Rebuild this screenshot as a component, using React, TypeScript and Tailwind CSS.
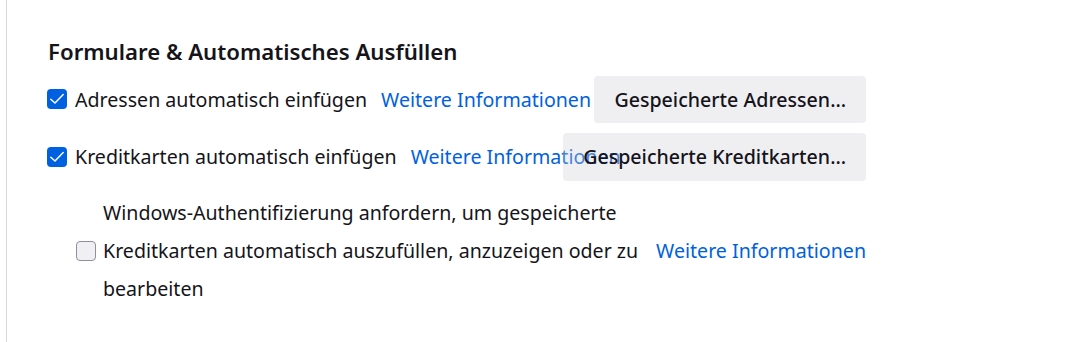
import React from "react"

const font = { fontFamily: '"Noto Sans", "Open Sans", sans-serif' }

function Check({ checked }: { checked: boolean }) {
  if (checked) {
    return (
      <span className="flex h-[20px] w-[20px] flex-none items-center justify-center rounded-[4px] bg-[#0061e0]">
        <svg width="18" height="18" viewBox="0 0 18 18" fill="none">
          <path d="M2.8 9.2 L7 13 L15.2 4.6" stroke="white" strokeWidth="1.5" strokeLinecap="round" strokeLinejoin="round" />
        </svg>
      </span>
    )
  }
  return <span className="block h-[20px] w-[20px] flex-none rounded-[4px] border border-[#8f8f9d] bg-[#f0f0f4]" />
}

function Link() {
  return <a className="whitespace-nowrap text-[#0061e0]">Weitere Informationen</a>
}

export default function App() {
  return (
    <div className="h-[342px] bg-white pl-[6px] text-[#15141a]" style={font}>
      <div className="h-full border-l border-[#d7d7db] pl-[40px] pt-[36px]">
        <h2 className="pl-[1px] text-[22.2px] font-semibold leading-[32px]">Formulare &amp; Automatisches Ausfüllen</h2>

        <div className="mt-[8px] flex w-[819px] flex-col gap-[10px] text-[19.6px]">
          <div className="flex items-center">
            <div className="flex min-w-0 flex-1 items-center whitespace-nowrap">
              <Check checked />
              <span className="ml-[8px]">Adressen automatisch einfügen</span>
              <span className="ml-[14px]"><Link /></span>
            </div>
            <button className="h-[47px] flex-none rounded-[4px] bg-[rgba(207,207,216,0.33)] px-[20px] font-medium">
              Gespeicherte Adressen…
            </button>
          </div>

          <div className="flex items-center">
            <div className="flex min-w-0 flex-1 items-center whitespace-nowrap">
              <Check checked />
              <span className="ml-[8px]">Kreditkarten automatisch einfügen</span>
              <span className="ml-[14px]"><Link /></span>
            </div>
            <button className="h-[48px] flex-none rounded-[4px] bg-[rgba(207,207,216,0.33)] px-[20px] font-medium">
              Gespeicherte Kreditkarten…
            </button>
          </div>
        </div>

        <div className="mt-[13px] flex w-[819px] items-center pl-[29px] text-[19.6px]">
          <Check checked={false} />
          <p className="ml-[7px] leading-[38px]">
            Windows-Authentifizierung anfordern, um gespeicherte
            <br />
            Kreditkarten automatisch auszufüllen, anzuzeigen oder zu
            <br />
            bearbeiten
          </p>
          <span className="ml-auto"><Link /></span>
        </div>
      </div>
    </div>
  )
}
